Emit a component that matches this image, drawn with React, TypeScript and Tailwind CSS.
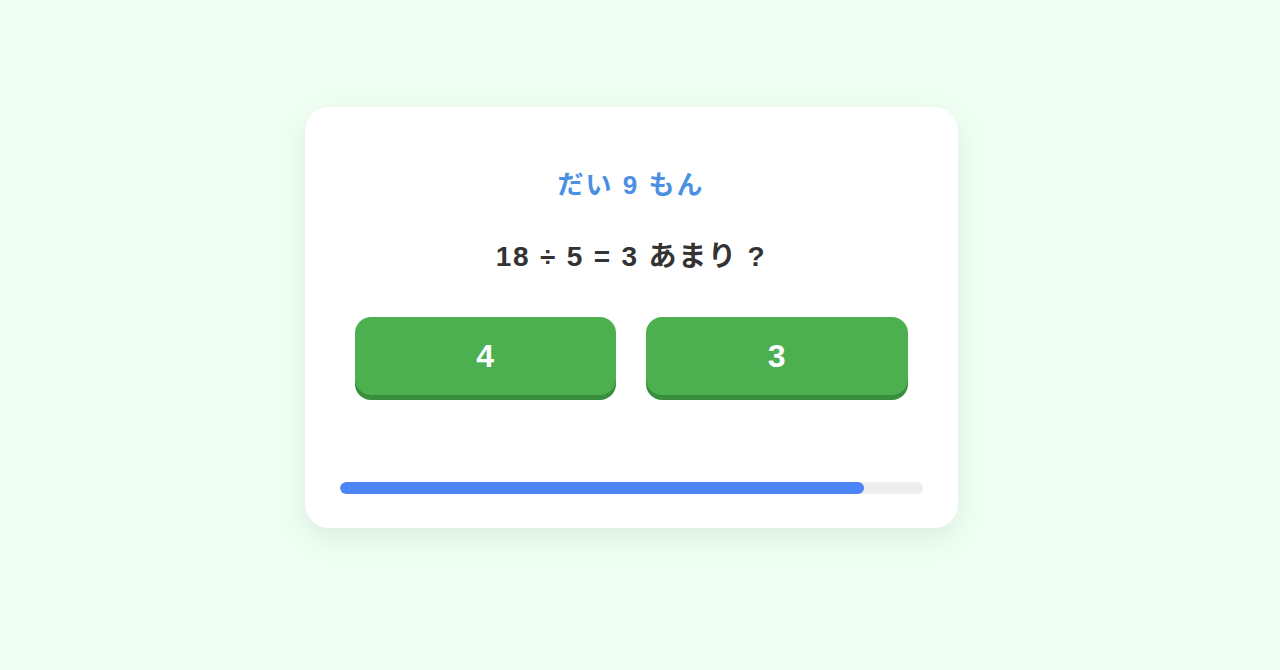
import React from "react";

export default function App() {
  const font = { fontFamily: '"Liberation Sans", "Noto Sans CJK JP", sans-serif' };
  return (
    <div className="w-full h-[670px] bg-[#effff4] flex items-center justify-center" style={font}>
      <div className="mr-[18px] mb-[36px] w-[653px] bg-white rounded-[24px] shadow-[0_10px_30px_rgba(0,0,0,0.08)] pt-[56px] pb-[34px] px-[35px] flex flex-col items-center">
        <div className="text-[26px] leading-[44px] font-bold tracking-[2px] text-[#4a90e2]">だい 9 もん</div>
        <div className="mt-[28px] text-[28px] leading-[44px] font-bold tracking-[1.8px] text-[#333333]">18 ÷ 5 = 3 あまり ?</div>
        <div className="mt-[38px] mb-[5px] w-full px-[15px] grid grid-cols-2 gap-[30px]">
          <button className="h-[78px] rounded-[16px] bg-[#4caf50] shadow-[0_5px_0_#388e3c] text-white text-[32px] font-bold flex items-center justify-center">4</button>
          <button className="h-[78px] rounded-[16px] bg-[#4caf50] shadow-[0_5px_0_#388e3c] text-white text-[32px] font-bold flex items-center justify-center">3</button>
        </div>
        <div className="mt-[82px] w-full h-[12px] rounded-full bg-[#eeeeee] overflow-hidden">
          <div className="h-full rounded-full bg-[#4a84f6]" style={{ width: "90%" }} />
        </div>
      </div>
    </div>
  );
}
